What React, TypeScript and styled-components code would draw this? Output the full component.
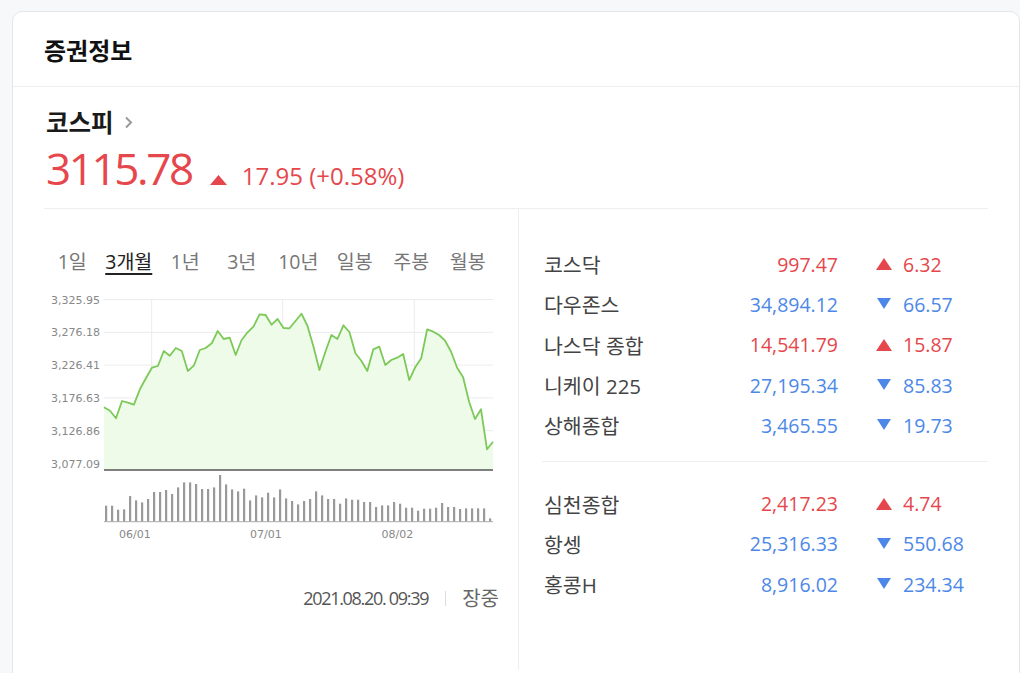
import React from 'react';
import styled, { createGlobalStyle } from 'styled-components';

const RED = '#e5474c';
const BLUE = '#4d88e8';

const GlobalStyle = createGlobalStyle`
  body {
    margin: 0;
    background: #f7f8fa;
    font-family: "Open Sans", "Noto Sans CJK KR", sans-serif;
  }
`;

const Page = styled.div`
  padding: 11px 0 0 12px;
  height: 662px;
  overflow: hidden;
`;

const Card = styled.section`
  width: 1008px;
  min-height: 720px;
  box-sizing: border-box;
  background: #fff;
  border: 1px solid #e4e6ea;
  border-radius: 10px;
`;

const Header = styled.header`
  height: 74px;
  display: flex;
  align-items: center;
  padding-left: 31px;
  border-bottom: 1px solid #eceef1;
`;

const Title = styled.h2`
  margin: 0;
  font-family: "Noto Sans CJK KR", sans-serif;
  font-size: 24px;
  font-weight: 700;
  color: #111;
`;

const Body = styled.div`
  padding: 0 31px;
`;

const Summary = styled.div`
  padding: 24px 0 17px 2px;
  border-bottom: 1px solid #eceef1;
`;

const IndexName = styled.a`
  display: inline-flex;
  align-items: center;
  gap: 10px;
  font-family: "Noto Sans CJK KR", sans-serif;
  font-size: 24.5px;
  font-weight: 700;
  line-height: 22px;
  color: #1a1a1a;
  text-decoration: none;
`;

const PriceRow = styled.div`
  display: flex;
  align-items: baseline;
  margin-top: 9px;
  color: ${RED};
`;

const Price = styled.span`
  font-size: 44px;
  letter-spacing: -2.4px;
  line-height: 44px;
`;

const Change = styled.span`
  font-size: 24px;
  line-height: 30px;
`;

const BigArrow = styled.svg`
  margin: 0 15px 6px 18px;
`;

const Columns = styled.div`
  display: grid;
  grid-template-columns: 475px 1fr;
`;

const LeftCol = styled.div`
  border-right: 1px solid #eceef1;
  padding: 40px 19px 60px 0;
`;

const Tabs = styled.div`
  display: flex;
  width: 452px;
`;

const Tab = styled.span<{ $active?: boolean }>`
  width: 56.5px;
  text-align: center;
  font-size: 19.5px;
  line-height: 26px;
  color: ${({ $active }) => ($active ? '#222' : '#777')};
  span {
    text-decoration: ${({ $active }) => ($active ? 'underline' : 'none')};
    text-underline-offset: 4px;
    text-decoration-thickness: 1.5px;
  }
`;

const ChartSvg = styled.svg`
  display: block;
  margin-top: 15px;
  text {
    font-family: "DejaVu Sans", sans-serif;
    font-size: 11px;
    fill: #888;
  }
`;

const Stamp = styled.div`
  display: flex;
  justify-content: flex-end;
  align-items: center;
  margin-top: 41px;
  font-size: 18px;
  line-height: 24px;
  color: #555;
`;

const StampTime = styled.span`
  letter-spacing: -1.3px;
`;

const StampSep = styled.i`
  width: 1px;
  height: 15px;
  background: #ddd;
  margin: 0 16px 0 17px;
`;

const StampState = styled.span`
  font-family: "Noto Sans CJK KR", sans-serif;
  font-size: 20px;
  color: #666;
`;

const RightCol = styled.div`
  padding-left: 23px;
`;

const Group = styled.div<{ $first?: boolean }>`
  padding: ${({ $first }) => ($first ? '35px 0 16px' : '21px 0')};
  border-bottom: ${({ $first }) => ($first ? '1px solid #eceef1' : 'none')};
`;

const Row = styled.div`
  display: flex;
  align-items: center;
  height: 40.3px;
  padding-left: 2px;
`;

const Name = styled.span`
  width: 189px;
  font-size: 20.5px;
  color: #444;
`;

const Value = styled.span<{ $up: boolean }>`
  width: 105px;
  text-align: right;
  font-size: 19.5px;
  color: ${({ $up }) => ($up ? RED : BLUE)};
`;

const Arrow = styled.svg`
  margin: 0 11px 0 38px;
  flex-shrink: 0;
`;

const Diff = styled.span<{ $up: boolean }>`
  font-size: 19.5px;
  color: ${({ $up }) => ($up ? RED : BLUE)};
`;

type Market = { name: string; value: string; diff: string; up: boolean };

const groupA: Market[] = [
  { name: '코스닥', value: '997.47', diff: '6.32', up: true },
  { name: '다우존스', value: '34,894.12', diff: '66.57', up: false },
  { name: '나스닥 종합', value: '14,541.79', diff: '15.87', up: true },
  { name: '니케이 225', value: '27,195.34', diff: '85.83', up: false },
  { name: '상해종합', value: '3,465.55', diff: '19.73', up: false },
];

const groupB: Market[] = [
  { name: '심천종합', value: '2,417.23', diff: '4.74', up: true },
  { name: '항셍', value: '25,316.33', diff: '550.68', up: false },
  { name: '홍콩H', value: '8,916.02', diff: '234.34', up: false },
];

const tabs = ['1일', '3개월', '1년', '3년', '10년', '일봉', '주봉', '월봉'];

// chart values, in page y coordinates (top of svg = 290)
const line = [
  407.3, 410.7, 418.3, 401, 402.7, 404.7, 389.3, 378.3, 367.7, 366, 351, 355.7, 348, 351, 371,
  365.7, 350, 348, 343.3, 331, 339, 337.7, 355, 340, 332.3, 326.3, 314.3, 315, 324.7, 319, 328,
  328.3, 321, 313.7, 326, 346.7, 370, 351.7, 335, 339, 325.3, 332, 353.3, 360.7, 371, 349.3,
  346.7, 365, 360, 357.7, 354, 380, 367.3, 358.3, 329.3, 331.7, 335, 340.7, 351.7, 367.7, 377.3,
  401.7, 419, 409.3, 449.3, 441.7,
];

const volume = [
  16, 16, 12, 12.3, 25.7, 21.3, 19.3, 22.7, 29.7, 29.7, 31.7, 27.7, 34.3, 39.3, 39.3, 37.7, 32.7,
  32.7, 34.3, 46.7, 37.3, 32.3, 30.3, 33, 21.3, 26.3, 24.3, 29, 24.3, 32.3, 23.3, 20.7, 17.3,
  20.7, 22.7, 30.3, 26.3, 22.7, 22.7, 18, 23.3, 22, 22, 19.7, 19.7, 14.7, 16.3, 16.3, 19.7, 18,
  14, 14, 11, 13, 13, 14, 18.7, 14.7, 14.7, 12.7, 13.3, 13.3, 13.3, 13.3, 3.3,
];

const yLabels = ['3,325.95', '3,276.18', '3,226.41', '3,176.63', '3,126.86', '3,077.09'];
const xLabels = [
  { x: 107.7, label: '06/01' },
  { x: 238.7, label: '07/01' },
  { x: 370.3, label: '08/02' },
];

const PLOT_L = 60;
const PLOT_R = 449;
const BASE = 180;
const VOL_BASE = 231.7;

const Chart: React.FC = () => {
  const step = (PLOT_R - PLOT_L) / (line.length - 1);
  const pts = line.map((y, i) => `${(PLOT_L + i * step).toFixed(1)},${(y - 290).toFixed(1)}`);
  const area = `M${PLOT_L},${BASE} L${pts.join(' L')} L${PLOT_R},${BASE} Z`;

  return (
    <ChartSvg width="456" height="255" viewBox="0 0 456 255">
      {yLabels.map((l, i) => {
        const y = 9.5 + i * 32.8;
        return (
          <g key={l}>
            <line x1={PLOT_L} x2={PLOT_R} y1={y} y2={y} stroke="#ececec" strokeWidth="1" />
            <text x="56" y={y + 4} textAnchor="end">
              {l}
            </text>
          </g>
        );
      })}
      {xLabels.map((d) => (
        <line key={d.label} x1={d.x} x2={d.x} y1={9.5} y2={BASE} stroke="#ececec" strokeWidth="1" />
      ))}
      <path d={area} fill="#eefbe8" />
      <polyline points={pts.join(' ')} fill="none" stroke="#7cc95a" strokeWidth="1.8" strokeLinejoin="round" />
      <line x1={PLOT_L} x2={PLOT_R} y1={BASE} y2={BASE} stroke="#555" strokeWidth="1.5" />
      {volume.map((h, i) => (
        <rect key={i} x={61 + i * 6} y={VOL_BASE - h} width="2.2" height={h} fill="#999" />
      ))}
      <line x1={PLOT_L} x2={PLOT_R} y1={VOL_BASE} y2={VOL_BASE} stroke="#aaa" strokeWidth="1" />
      {xLabels.map((d) => (
        <text key={d.label} x={d.x - 1} y={248} textAnchor="end">
          {d.label}
        </text>
      ))}
    </ChartSvg>
  );
};

const Triangle: React.FC<{ up: boolean }> = ({ up }) => (
  <Arrow width="16" height="12" viewBox="0 0 16 12">
    {up ? (
      <polygon points="8,0 16,12 0,12" fill={RED} />
    ) : (
      <polygon points="1,0 15,0 8,11" fill={BLUE} />
    )}
  </Arrow>
);

const MarketRow: React.FC<{ m: Market }> = ({ m }) => (
  <Row>
    <Name>{m.name}</Name>
    <Value $up={m.up}>{m.value}</Value>
    <Triangle up={m.up} />
    <Diff $up={m.up}>{m.diff}</Diff>
  </Row>
);

const App: React.FC = () => (
  <Page>
    <GlobalStyle />
    <Card>
      <Header>
        <Title>증권정보</Title>
      </Header>
      <Body>
        <Summary>
          <IndexName href="#">
            코스피
            <svg width="9" height="13" viewBox="0 0 9 13">
              <polyline points="2,1.5 7,6.5 2,11.5" fill="none" stroke="#999" strokeWidth="2" />
            </svg>
          </IndexName>
          <PriceRow>
            <Price>3115.78</Price>
            <BigArrow width="17" height="10" viewBox="0 0 17 10">
              <polygon points="8.5,0 17,10 0,10" fill={RED} />
            </BigArrow>
            <Change>17.95 (+0.58%)</Change>
          </PriceRow>
        </Summary>
        <Columns>
          <LeftCol>
            <Tabs>
              {tabs.map((t) => (
                <Tab key={t} $active={t === '3개월'}>
                  <span>{t}</span>
                </Tab>
              ))}
            </Tabs>
            <Chart />
            <Stamp>
              <StampTime>2021.08.20. 09:39</StampTime>
              <StampSep />
              <StampState>장중</StampState>
            </Stamp>
          </LeftCol>
          <RightCol>
            <Group $first>
              {groupA.map((m) => (
                <MarketRow key={m.name} m={m} />
              ))}
            </Group>
            <Group>
              {groupB.map((m) => (
                <MarketRow key={m.name} m={m} />
              ))}
            </Group>
          </RightCol>
        </Columns>
      </Body>
    </Card>
  </Page>
);

export default App;
